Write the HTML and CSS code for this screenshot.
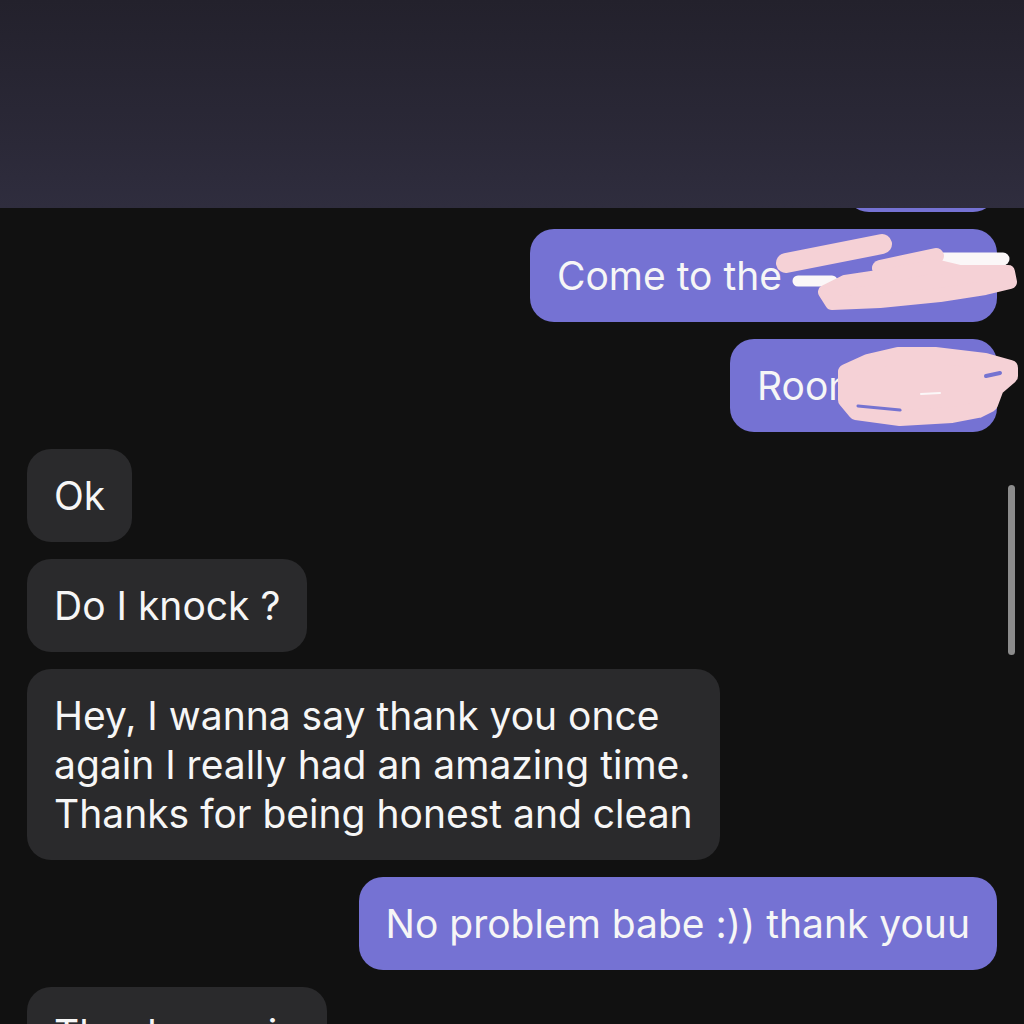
FILE: index.html
```html
<!DOCTYPE html>
<html lang="en">
<head>
<meta charset="utf-8">
<title>Chat</title>
<link rel="stylesheet" href="styles.css">
</head>
<body>
<div class="screen">
  <div class="chat">
    <div class="bubble out peek"></div>
    <div class="bubble out redacted-a">Come to the</div>
    <div class="bubble out redacted-b">Room</div>
    <div class="bubble in">Ok</div>
    <div class="bubble in">Do I knock ?</div>
    <div class="bubble in">Hey, I wanna say thank you once<br>again I really had an amazing time.<br>Thanks for being honest and clean</div>
    <div class="bubble out">No problem babe :)) thank youu</div>
    <div class="bubble in">Thanks again</div>
  </div>
  <div class="header"></div>
  <div class="scrollbar"></div>
  <svg class="redact" width="1024" height="1024" viewBox="0 0 1024 1024">
    <g stroke-linecap="round" stroke-linejoin="round">
      <path d="M943 259 L1003 259" stroke="#fbf7f8" stroke-width="13" fill="none"/>
      <path d="M798 281 L832 281" stroke="#fbf7f8" stroke-width="11" fill="none"/>
      <path d="M786 263 L882 244" stroke="#f5d1d6" stroke-width="20" fill="none"/>
      <path d="M880 268 L936 256" stroke="#f5d1d6" stroke-width="16" fill="none"/>
      <path d="M825 292 L845 282 L885 276 L935 266 L960 272 L1008 272 L1010 282 L985 288 L940 295 L880 301 L832 303 Z" fill="#f5d1d6" stroke="#f5d1d6" stroke-width="14"/>
      <path d="M846 372 L868 362 L898 355 L935 355 L985 361 L1010 368 L1010 376 L996 388 L990 404 L978 410 L952 415 L900 418 L856 412 L846 400 Z" fill="#f5d1d6" stroke="#f5d1d6" stroke-width="16"/>
      <path d="M858 406 L900 410" stroke="#7573d1" stroke-width="3" fill="none"/>
      <path d="M921 394 L940 393" stroke="#fbf7f8" stroke-width="2" fill="none"/>
      <path d="M986 376 L1000 373" stroke="#7573d1" stroke-width="4" fill="none"/>
    </g>
  </svg>
</div>
</body>
</html>
```
FILE: styles.css
```css
html, body {
  margin: 0;
  padding: 0;
  background: #111111;
}
.screen {
  position: relative;
  width: 1024px;
  height: 1024px;
  overflow: hidden;
  background: #111111;
  font-family: Inter, Roboto, sans-serif;
}
.header {
  position: absolute;
  top: 0;
  left: 0;
  width: 1024px;
  height: 208px;
  background: linear-gradient(180deg, #23212c 0%, #2b2938 70%, #2f2d3e 100%);
  z-index: 2;
}
.chat {
  display: flex;
  flex-direction: column;
  gap: 17px;
  padding: 119px 27px 0 27px;
}
.bubble {
  font-size: 39px;
  line-height: 49px;
  padding: 22px 27px;
  border-radius: 24px;
  color: #f6f6f6;
  white-space: nowrap;
  letter-spacing: 0;
}
.bubble.in {
  align-self: flex-start;
  background: #2a2a2c;
}
.bubble.out {
  align-self: flex-end;
  background: #7572d3;
}
.peek {
  width: 98px;
  height: 49px;
}
.redacted-a {
  width: 413px;
}
.redacted-b {
  width: 213px;
}
.scrollbar {
  position: absolute;
  left: 1008px;
  top: 485px;
  width: 7px;
  height: 170px;
  border-radius: 4px;
  background: #8c8c8c;
  z-index: 3;
}
.redact {
  position: absolute;
  top: 0;
  left: 0;
  z-index: 1;
}
```
